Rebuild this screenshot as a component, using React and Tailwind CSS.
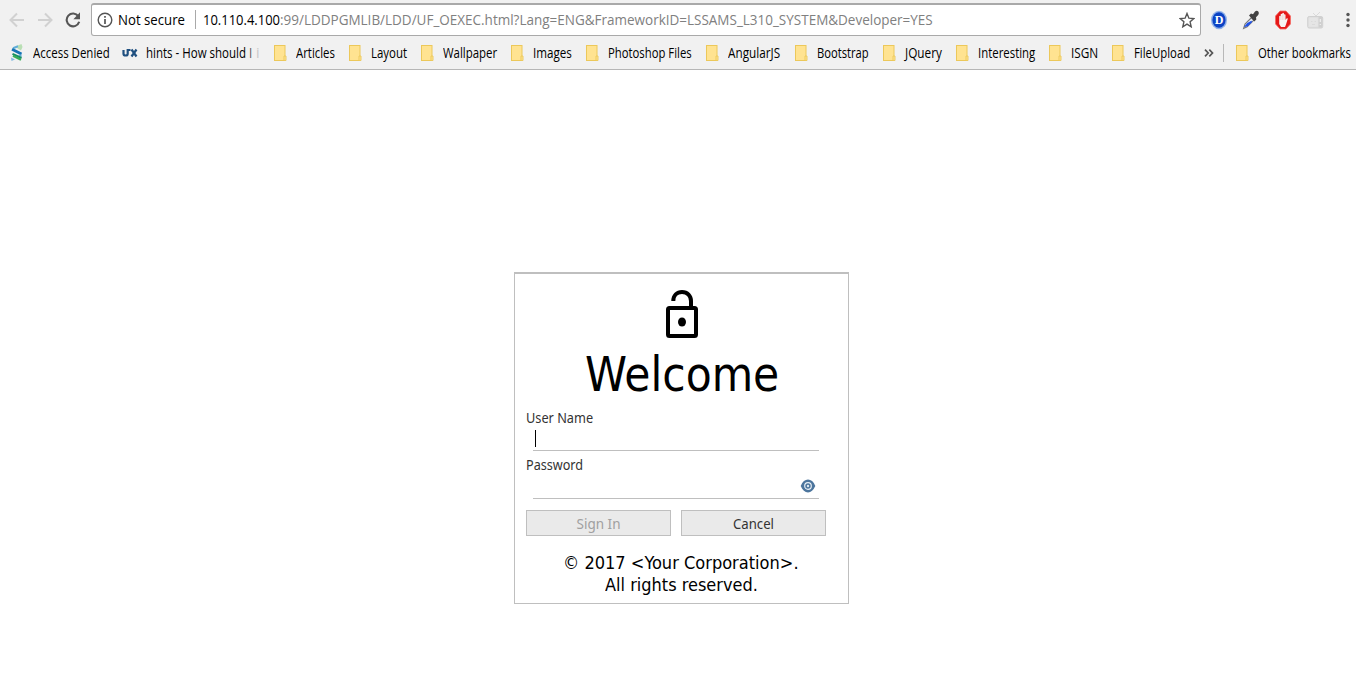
import { useLayoutEffect, useRef, useState } from "react";

const UI = "font-['Open_Sans','Noto_Sans',sans-serif]";
const FORM = "font-['Noto_Sans','Open_Sans',sans-serif]";
const DISPLAY = "font-['DejaVu_Sans_Condensed','DejaVu_Sans',sans-serif]";

/* Single line of text condensed or widened to the given width. */
function Fit({ width, className = "", children }) {
  const ref = useRef(null);
  const [scale, setScale] = useState(1);
  useLayoutEffect(() => {
    setScale(width / ref.current.offsetWidth);
  }, [width]);
  return (
    <span className={`block shrink-0 whitespace-nowrap ${className}`} style={{ width }}>
      <span ref={ref} className="inline-block origin-left" style={{ transform: `scaleX(${scale})` }}>
        {children}
      </span>
    </span>
  );
}

function Folder() {
  return (
    <svg className="block shrink-0" width="13" height="16" viewBox="0 0 13 16">
      <rect x="0.5" y="0.5" width="10.5" height="15" fill="#ffe391" stroke="#ecc85a" />
      <path d="M10 15.5v-4.5h2v4.5z" fill="#ffe391" stroke="#ecc85a" strokeWidth=".9" />
    </svg>
  );
}

const bookmarks = [
  ["Articles", 39, "w-[75px]"],
  ["Layout", 36, "w-[72px]"],
  ["Wallpaper", 54, "w-[90px]"],
  ["Images", 39, "w-[75px]"],
  ["Photoshop Files", 84, "w-[120px]"],
  ["AngularJS", 52, "w-[89px]"],
  ["Bootstrap", 52, "w-[88px]"],
  ["JQuery", 37, "w-[73px]"],
  ["Interesting", 57, "w-[93px]"],
  ["ISGN", 27, "w-[63px]"],
  ["FileUpload", 56, "w-[92px]"],
];

function Toolbar() {
  return (
    <div className="flex h-10 items-center pb-px">
      <svg className="ml-[9px] shrink-0" width="16" height="16" viewBox="0 0 16 16" fill="none" stroke="#d1d1d1" strokeWidth="2">
        <path d="M15 8H2M8 1.5L1.5 8L8 14.5" />
      </svg>
      <svg className="ml-3 shrink-0" width="16" height="16" viewBox="0 0 16 16" fill="none" stroke="#d1d1d1" strokeWidth="2">
        <path d="M1 8h13M8 1.5L14.5 8L8 14.5" />
      </svg>
      <svg className="ml-3 shrink-0" width="16" height="16" viewBox="0 0 16 16" fill="none">
        <path d="M13.3 4.2A6.4 6.4 0 1 0 14.2 9.8" stroke="#555" strokeWidth="2.1" />
        <path d="M15 .3v6.9H8.4z" fill="#555" />
      </svg>
      <div className="ml-[10px] flex h-[33px] w-[1110px] shrink-0 items-center rounded-[3px] border border-t-2 border-[#a9a9a9] bg-white pb-px">
        <svg className="ml-[5px] shrink-0" width="16" height="16" viewBox="0 0 16 16" fill="none">
          <circle cx="8" cy="8" r="6.8" stroke="#555" strokeWidth="1.4" />
          <path d="M8 7v5M8 4v1.7" stroke="#555" strokeWidth="1.7" />
        </svg>
        <Fit width={67} className="ml-[5px] text-[14px] text-black">Not secure</Fit>
        <span className="ml-[10px] h-[19px] w-px bg-[#a9a9a9]" />
        <Fit width={77} className="ml-[7px] text-[14.5px] text-black">10.110.4.100</Fit>
        <Fit width={653} className="text-[14.5px] text-[#808080]">
          :99/LDDPGMLIB/LDD/UF_OEXEC.html?Lang=ENG&amp;FrameworkID=LSSAMS_L310_SYSTEM&amp;Developer=YES
        </Fit>
        <svg className="ml-auto mr-[5px] shrink-0" width="16" height="16" viewBox="0 0 16 16" fill="none" stroke="#555" strokeWidth="1.4">
          <path d="M8 1.5l1.9 4.7 4.9.4-3.7 3.2 1.1 5L8 12.1 3.8 14.8l1.1-5L1.2 6.6l4.9-.4z" />
        </svg>
      </div>
      <svg className="ml-[9px] shrink-0" width="18" height="20" viewBox="0 0 18 20">
        <ellipse cx="9" cy="10" rx="8" ry="9.3" fill="#8fb0e8" />
        <ellipse cx="9" cy="10" rx="6.6" ry="7.8" fill="#0b43c5" />
        <text x="9" y="14" textAnchor="middle" className="font-['Liberation_Serif',serif] text-[12px] font-bold" fill="#fff">D</text>
      </svg>
      <svg className="ml-[14px] shrink-0" width="18" height="20" viewBox="0 0 18 20">
        <path d="M1.6 18.4L3 14l6.500-6.500 2.500 2.600-6.800 6.600z" fill="#e8ecf5" stroke="#777" strokeWidth="1.1" />
        <path d="M3.700 16l2-2.500 4-2-4.200 4z" fill="#2253e8" stroke="#2253e8" strokeWidth="1.4" />
        <path d="M7 5.500L9 3.600l2 .7 2-2.800c1.600-1.500 4-.5 3.800 1.700 0 1.200-.7 2-2.800 4l.3 2.300-2 2z" fill="#424242" />
      </svg>
      <svg className="ml-[14px] shrink-0" width="18" height="20" viewBox="0 0 18 20">
        <path d="M6 1h6l4.500 5v8L12 19H6l-4.500-5V6z" fill="#e51818" stroke="#f56a62" strokeWidth=".8" />
        <path d="M5.200 10V6.300q.8-1 1.500 0V4.300q.8-1 1.600 0V3.300q.8-1 1.600 0v1.200q.9-.8 1.600.2V10l1-1.500q1.200-.8 1.300.3L12 14.500 11 17H7L5.200 14z" fill="#f7f3f1" />
        <path d="M6.800 6v4M8.400 5v5M10 5v5" stroke="#ddb8b4" strokeWidth=".4" />
      </svg>
      <svg className="ml-[15px] mt-[2px] shrink-0" width="17" height="20" viewBox="0 0 17 20" fill="none">
        <path d="M6 2l3 3 4-4" stroke="#dadada" />
        <rect x=".7" y="5.500" width="15" height="11.500" rx="1.500" fill="#e0e0e0" stroke="#d0d0d0" />
        <path d="M11.500 6h3.500v10.500h-3.500z" fill="#d0d0d0" />
        <rect x="2" y="7" width="8.800" height="8.500" rx="1" fill="#e5e5e5" />
        <path d="M4 10.500h1.500M7.500 10.500h1.500M5 13.500h3" stroke="#dadada" />
        <path d="M13.300 8v3M13.300 13v1" stroke="#efefef" strokeWidth="1.300" />
      </svg>
      <svg className="ml-[21px] shrink-0" width="6" height="16" viewBox="0 0 6 16" fill="#555">
        <circle cx="3" cy="2.500" r="1.700" />
        <circle cx="3" cy="8" r="1.700" />
        <circle cx="3" cy="13.500" r="1.700" />
      </svg>
    </div>
  );
}

function BookmarkBar() {
  return (
    <div className="flex h-[30px] items-center pb-[4px] text-[14px] leading-5 text-black">
      <svg className="ml-[10px] shrink-0" width="14" height="18" viewBox="0 0 14 18" fill="none">
        <path d="M7 1.800L11.500 0l1 3-1.500 3.500-3.500-2z" fill="#b9dfb4" />
        <path d="M8 2.300L3 4.200" stroke="#62aed8" strokeWidth="2" />
        <path d="M2 5.200L11.500 10" stroke="#1673b5" strokeWidth="2.800" />
        <path d="M11.500 10.200v3L8 11z" fill="#62aed8" />
        <path d="M2.500 9.800l9 4.200" stroke="#168d65" strokeWidth="2" />
        <path d="M3 11.800l8 3.900" stroke="#35ad58" strokeWidth="2.200" />
        <path d="M1 13.500l4 2L1.500 17z" fill="#83b9df" />
      </svg>
      <Fit width={77} className="ml-[9px]">Access Denied</Fit>
      <svg className="ml-[12px] shrink-0" width="16" height="12" viewBox="0 0 16 12" fill="none" stroke="#205080" strokeWidth="2.200">
        <path d="M1.500 3v3.700q0 1.800 2.200 1.800 2 0 2-1.800V3h2.800" />
        <path d="M9.500 2.500l5 7M14.500 2.500l-5 7" />
      </svg>
      <div className="ml-2 flex w-[128px] shrink-0">
        <Fit width={106}>hints - How should <span className="text-[#555]">I</span></Fit>
        <span className="ml-[4px] w-[3px] overflow-hidden text-[#c8c8c8]">i</span>
      </div>
      {bookmarks.map(([name, width, itemWidth]) => (
        <div key={name} className={`flex shrink-0 items-center gap-[9px] ${itemWidth}`}>
          <Folder />
          <Fit width={width}>{name}</Fit>
        </div>
      ))}
      <svg className="shrink-0" width="10" height="8" viewBox="0 0 10 8" fill="none" stroke="#555" strokeWidth="1.700">
        <path d="M1 .7L4.200 4 1 7.300M5.300 .7L8.500 4 5.300 7.300" />
      </svg>
      <span className="ml-[9px] mr-[12px] h-[18px] w-px shrink-0 bg-[#b8b8b8]" />
      <div className="flex items-center gap-[9px]">
        <Folder />
        <Fit width={93}>Other bookmarks</Fit>
      </div>
    </div>
  );
}

function LoginCard() {
  return (
    <div className={`ml-[514px] mt-[202px] flex h-[332px] w-[335px] flex-col border border-t-2 border-[#bfbfbf] bg-white pl-[11px] text-black ${FORM}`}>
      <svg className="ml-[139px] mt-[16px] shrink-0" width="34" height="48" viewBox="0 0 34 48" fill="none" stroke="#000">
        <path d="M8.300 11C8.300 5.500 12 2 17 2c5.500 0 9 4 9 9v6" stroke="#000" strokeWidth="4" />
        <rect x="3" y="18" width="28" height="28" rx="1.500" strokeWidth="4" />
        <ellipse cx="17" cy="32" rx="4" ry="4.500" fill="#000" stroke="none" />
      </svg>
      <Fit width={194} className={`ml-[59px] mt-[6px] text-[48px] leading-[60px] ${DISPLAY}`}>Welcome</Fit>
      <Fit width={67} className="mt-[4px] text-[13.5px] leading-5 text-[#333]">User Name</Fit>
      <div className="ml-[7px] flex h-[23px] w-[286px] items-start border-b border-[#bfbfbf] pl-[2px] pt-[2px]">
        <span className="h-[17px] w-px bg-black" />
      </div>
      <Fit width={57} className="mt-[4px] text-[13.5px] leading-5 text-[#333]">Password</Fit>
      <div className="ml-[7px] flex h-[24px] w-[286px] items-start justify-end border-b border-[#bfbfbf] pr-[3px] pt-[4px]">
        <svg width="16" height="14" viewBox="0 0 16 14">
          <path d="M.7 7C2.500 2.600 5 .6 8 .6S13.500 2.600 15.300 7C13.500 11.400 11 13.400 8 13.400S2.500 11.400.7 7z" fill="#4c759d" />
          <circle cx="8" cy="7" r="3.300" fill="#4c759d" stroke="#e8eff5" strokeWidth="1.200" />
          <circle cx="8" cy="7" r="1.200" fill="#dce7f0" />
        </svg>
      </div>
      <div className="mt-[11px] flex gap-[10px] text-[13.500px]">
        <button className="flex h-[26px] w-[145px] items-center justify-center border border-[#bfbfbf] bg-[#eaeaea] pt-[2px] text-[#a0a0a0]">
          <Fit width={44}>Sign In</Fit>
        </button>
        <button className="flex h-[26px] w-[145px] items-center justify-center border border-[#bfbfbf] bg-[#eaeaea] pt-[2px] text-[#333]">
          <Fit width={41}>Cancel</Fit>
        </button>
      </div>
      <Fit width={236} className={`ml-[37px] mt-[16px] text-[17.5px] leading-[22px] ${DISPLAY}`}>© 2017 &lt;Your Corporation&gt;.</Fit>
      <Fit width={153} className={`ml-[79px] text-[17.5px] leading-[22px] ${DISPLAY}`}>All rights reserved.</Fit>
    </div>
  );
}

export default function App() {
  return (
    <div className="h-[687px] w-[1356px] overflow-hidden bg-white">
      <header className={`h-[70px] border-b border-[#b6b6b6] bg-[#f1f1f1] ${UI}`}>
        <Toolbar />
        <BookmarkBar />
      </header>
      <LoginCard />
    </div>
  );
}
